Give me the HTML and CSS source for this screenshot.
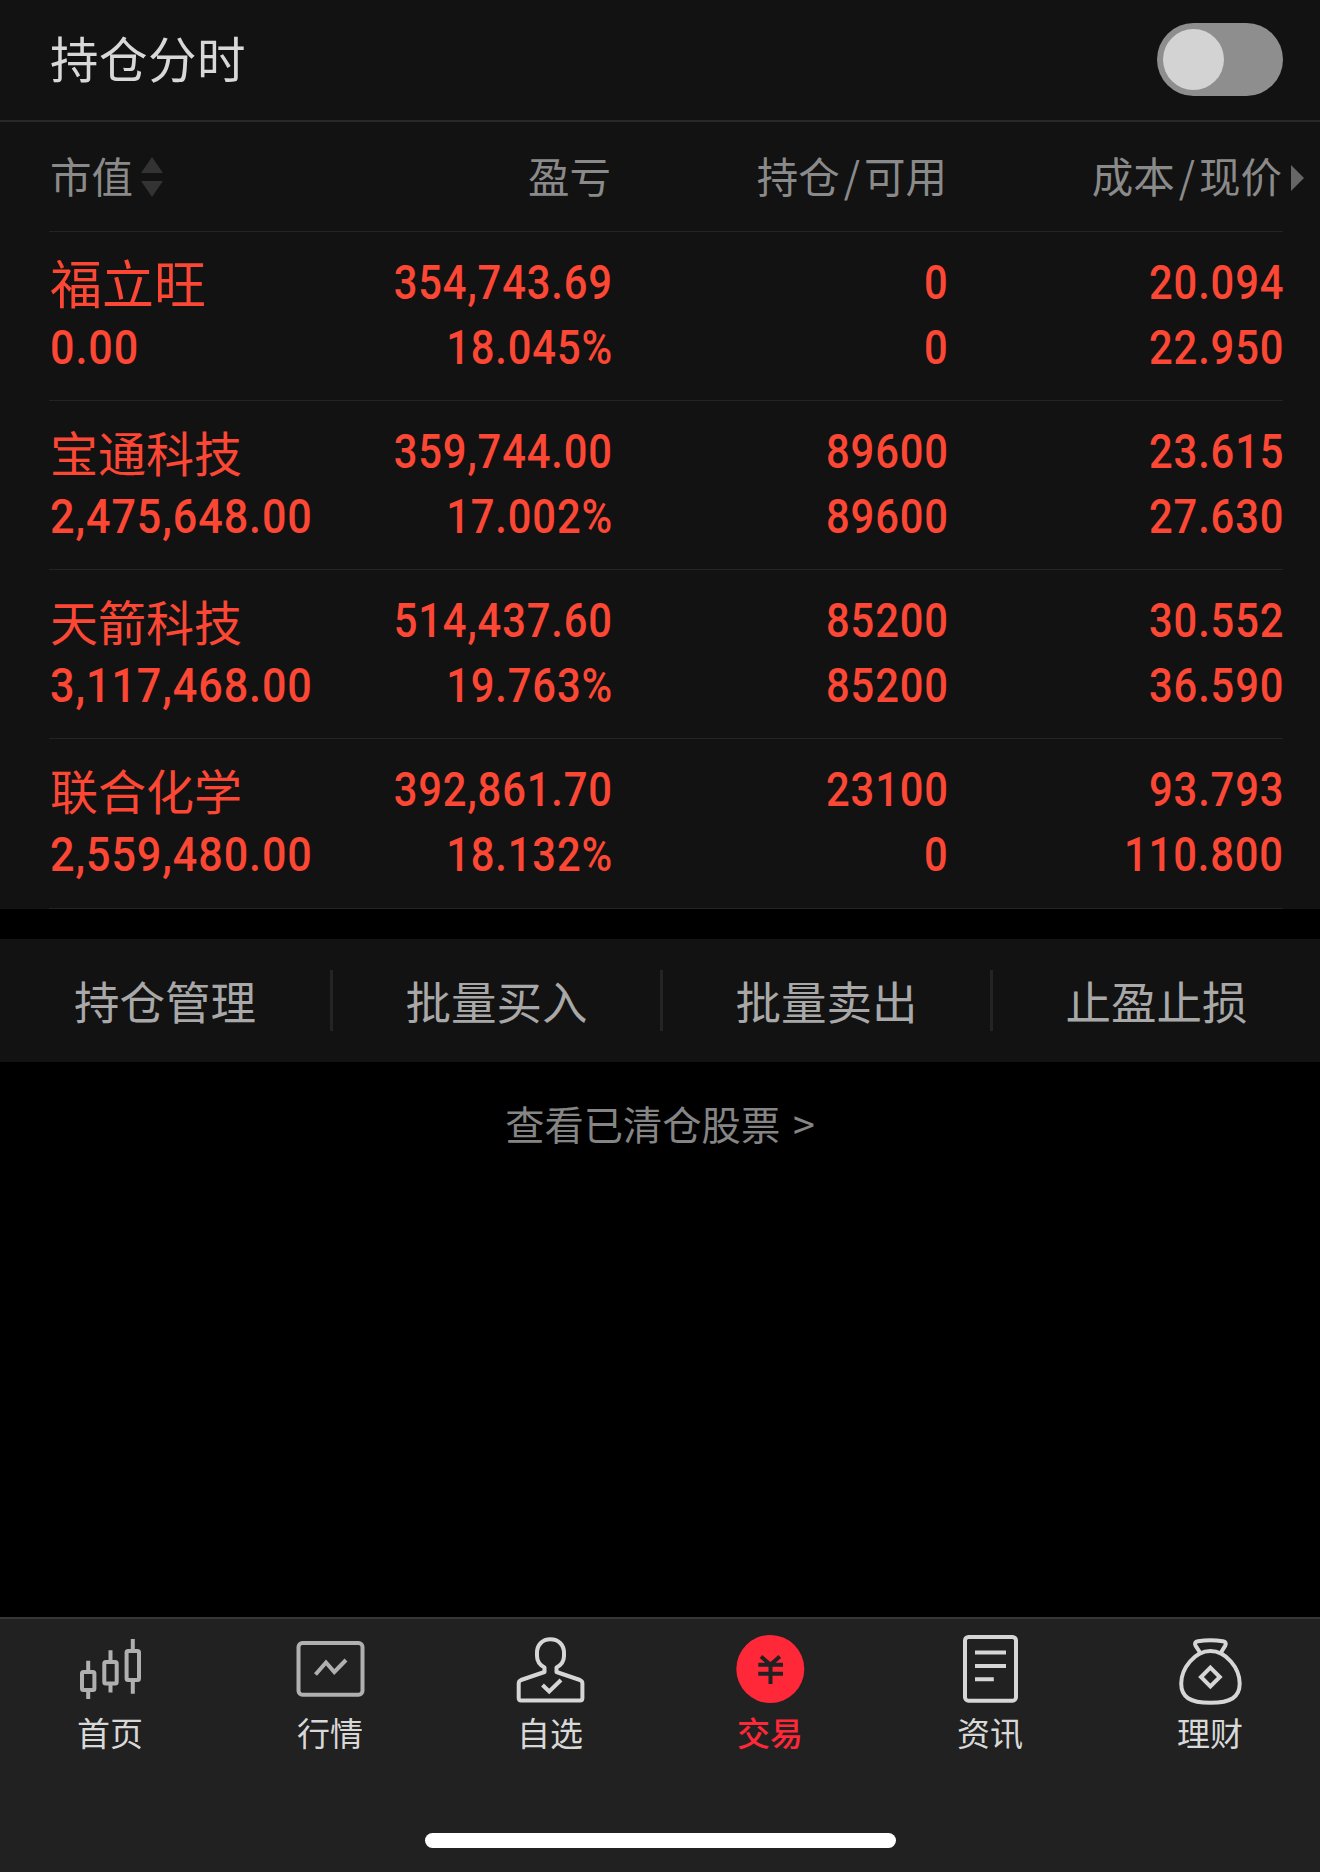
FILE: index.html
```html
<!DOCTYPE html>
<html lang="zh-CN">
<head>
    <meta charset="UTF-8">
    <meta name="viewport" content="width=device-width, initial-scale=1.0">
    <title>持仓</title>
    <link rel="stylesheet" href="styles.css">
</head>
<body>
    <header class="top-bar">
        <h1>持仓分时</h1>
        <div class="switch"><span class="knob"></span></div>
    </header>

    <main>
        <section class="holdings">
            <div class="row table-head">
                <div class="sortable">市值
                    <svg class="sort" viewBox="0 0 22 40"><path d="M11 0L22 16H0zM0 24H22L11 40z"/></svg>
                </div>
                <div>盈亏</div>
                <div>持仓<span class="slash">/</span>可用</div>
                <div>成本<span class="slash">/</span>现价<svg class="more" viewBox="0 0 13 26"><path d="M0 0L13 13L0 26z"/></svg></div>
            </div>
            <div class="row stock">
                <div><span class="name large">福立旺</span><span class="num">0.00</span></div>
                <div><span class="num">354,743.69</span><span class="num">18.045%</span></div>
                <div><span class="num">0</span><span class="num">0</span></div>
                <div><span class="num">20.094</span><span class="num">22.950</span></div>
            </div>
            <div class="row stock">
                <div><span class="name">宝通科技</span><span class="num">2,475,648.00</span></div>
                <div><span class="num">359,744.00</span><span class="num">17.002%</span></div>
                <div><span class="num">89600</span><span class="num">89600</span></div>
                <div><span class="num">23.615</span><span class="num">27.630</span></div>
            </div>
            <div class="row stock">
                <div><span class="name">天箭科技</span><span class="num">3,117,468.00</span></div>
                <div><span class="num">514,437.60</span><span class="num">19.763%</span></div>
                <div><span class="num">85200</span><span class="num">85200</span></div>
                <div><span class="num">30.552</span><span class="num">36.590</span></div>
            </div>
            <div class="row stock">
                <div><span class="name">联合化学</span><span class="num">2,559,480.00</span></div>
                <div><span class="num">392,861.70</span><span class="num">18.132%</span></div>
                <div><span class="num">23100</span><span class="num">0</span></div>
                <div><span class="num">93.793</span><span class="num">110.800</span></div>
            </div>
        </section>

        <section class="actions">
            <a>持仓管理</a>
            <a>批量买入</a>
            <a>批量卖出</a>
            <a>止盈止损</a>
        </section>

        <p class="cleared">查看已清仓股票 &gt;</p>
    </main>

    <footer>
        <nav class="tabs">
            <a class="tab dim">
                <svg class="icon" viewBox="0 0 68 68">
                    <rect x="6" y="37" width="12.4" height="18" rx="1.5"/>
                    <rect x="28.3" y="27" width="12.4" height="21.6" rx="1.5"/>
                    <rect x="50.6" y="16" width="12.4" height="29" rx="1.5"/>
                    <path d="M12.2 25.7V36M12.2 56V64M34.5 15.3V26M34.5 50V57.5M56.8 4V15M56.8 46V58.7"/>
                </svg>
                <span>首页</span>
            </a>
            <a class="tab dim">
                <svg class="icon" viewBox="0 0 68 68">
                    <rect x="2.5" y="8" width="64" height="51.8" rx="4"/>
                    <path d="M19.5 39.5L30 27.5L38.3 37L50 25"/>
                </svg>
                <span>行情</span>
            </a>
            <a class="tab">
                <svg class="icon" viewBox="0 0 68 68">
                    <path d="M28.5 37V32.5C23 29.5 21 26 21 21V18C21 9.5 26.5 4.3 34.4 4.3S48 9.5 48 18V21C48 26 46 29.5 40.5 32.5V37L64 45Q66.4 46 66.4 48.5V63Q66.4 65.6 64 65.6H5Q2.7 65.6 2.7 63V48.5Q2.7 46 5 45Z" stroke-linejoin="round"/>
                    <path d="M26.5 50L33.2 56.5L45 45"/>
                </svg>
                <span>自选</span>
            </a>
            <a class="tab active">
                <svg class="icon" viewBox="0 0 68 68">
                    <circle cx="34.3" cy="34" r="34"/>
                    <path d="M25 21.5L34.4 29.7L43.8 21.5M22.3 29.8H47M22.3 38.8H47M34.5 29V49"/>
                </svg>
                <span>交易</span>
            </a>
            <a class="tab">
                <svg class="icon" viewBox="0 0 68 68">
                    <rect x="9" y="2" width="51" height="63.7" rx="3.5"/>
                    <path d="M19 17.4H50M19 31H50M19 44.2H37.8"/>
                </svg>
                <span>资讯</span>
            </a>
            <a class="tab">
                <svg class="icon" viewBox="0 0 68 68">
                    <path d="M34.4 16C50 16 63.7 33 63.7 48.5C63.7 62 55 67.8 34.4 67.8S5.2 62 5.2 48.5C5.2 33 19 16 34.4 16Z"/>
                    <path d="M24 17.5L19.5 10.5Q18 6.8 22 6.2Q34.4 4.2 46.8 6.2Q50.8 6.8 49.3 10.5L45 17.5M34.4 32.6L43.8 42L34.4 51.4L25 42Z"/>
                </svg>
                <span>理财</span>
            </a>
        </nav>
        <div class="home-bar"></div>
    </footer>
</body>
</html>
```
FILE: styles.css
```css
* {
    box-sizing: border-box;
}
body {
    margin: 0;
    height: 1872px;
    display: flex;
    flex-direction: column;
    background: #000;
    color: #d8d8d8;
    font-family: "Noto Sans CJK SC", sans-serif;
}
.top-bar {
    height: 122px;
    padding: 0 37px 2px 50px;
    display: flex;
    justify-content: space-between;
    align-items: center;
    background: #121212;
    border-bottom: 2px solid #282828;
}
h1 {
    margin: 0;
    padding-bottom: 4px;
    font-size: 48.5px;
    font-weight: 400;
    letter-spacing: 0.5px;
}
.switch {
    width: 126px;
    height: 73px;
    padding: 6px;
    border-radius: 37px;
    background: #8e8e8e;
}
.knob {
    display: block;
    width: 61px;
    height: 61px;
    border-radius: 50%;
    background: #d3d3d3;
}
main {
    flex: 1;
}

/* holdings table */
.holdings {
    padding: 0 37px 0 49px;
    background: #121212;
}
.row {
    display: grid;
    grid-template-columns: 330px 233px 336px 335px;
    border-bottom: 1px solid #242424;
    text-align: right;
}
.row > div {
    padding-right: 1px;
}
.row > div:first-child {
    padding-left: 1px;
    text-align: left;
}
.table-head {
    height: 110px;
    padding-bottom: 3px;
    align-items: center;
    font-size: 41.5px;
    line-height: 60px;
    color: #8a8a8a;
}
.table-head .sortable {
    display: flex;
    align-items: center;
    gap: 8px;
}
.sort {
    width: 22px;
    height: 40px;
    margin-top: 4px;
    fill: #333;
}
.slash {
    margin: 0 4px;
}
.more {
    width: 13px;
    height: 26px;
    margin: 0 -22px 2px 9px;
    fill: #666;
}
.stock {
    height: 169px;
    padding-top: 18px;
    color: #fc4735;
}
.stock:last-child {
    height: 170px;
}
.stock > div {
    display: flex;
    flex-direction: column;
    align-items: flex-end;
}
.stock > div:first-child {
    align-items: flex-start;
}
.name {
    height: 65px;
    font-size: 48px;
    line-height: 64px;
}
.name.large {
    font-size: 52px;
}
.num {
    height: 65px;
    margin-right: -2px;
    font: 500 48.5px/65px Roboto, sans-serif;
    letter-spacing: 1px;
    transform: scaleX(.86);
    transform-origin: right;
}
.stock > div:first-child .num {
    transform: scaleX(.89);
    transform-origin: left;
}

/* batch buttons */
.actions {
    height: 123px;
    margin-top: 30px;
    display: grid;
    grid-template-columns: repeat(4, 1fr);
    align-items: center;
    background: #121212;
}
.actions a {
    height: 61px;
    font-size: 45.5px;
    line-height: 60px;
    text-align: center;
    color: #a8a8a8;
}
.actions a + a {
    border-left: 3px solid #242424;
}
.cleared {
    margin: 31px 0 0;
    font-size: 39.3px;
    line-height: 60px;
    word-spacing: 4px;
    text-align: center;
    color: #858585;
}

/* bottom tabs */
footer {
    height: 255px;
    background: #212121;
    border-top: 2px solid #363636;
}
.tabs {
    display: grid;
    grid-template-columns: repeat(6, 1fr);
    padding-top: 16px;
}
.tab {
    display: flex;
    flex-direction: column;
    align-items: center;
    font-size: 33px;
    line-height: 40px;
}
.tab span {
    margin: 9px 0 1px;
}
.icon {
    width: 68px;
    height: 68px;
    overflow: visible;
    fill: none;
    stroke: #d6d6d6;
    stroke-width: 4;
}
.dim .icon {
    stroke: #b0b0b0;
}
.active {
    color: #ff2839;
    font-weight: 500;
}
.active .icon {
    stroke: #212121;
}
.active circle {
    fill: #ff2839;
    stroke: none;
}
.home-bar {
    width: 471px;
    height: 15px;
    margin: 80px auto 0;
    border-radius: 8px;
    background: #fff;
}
```
